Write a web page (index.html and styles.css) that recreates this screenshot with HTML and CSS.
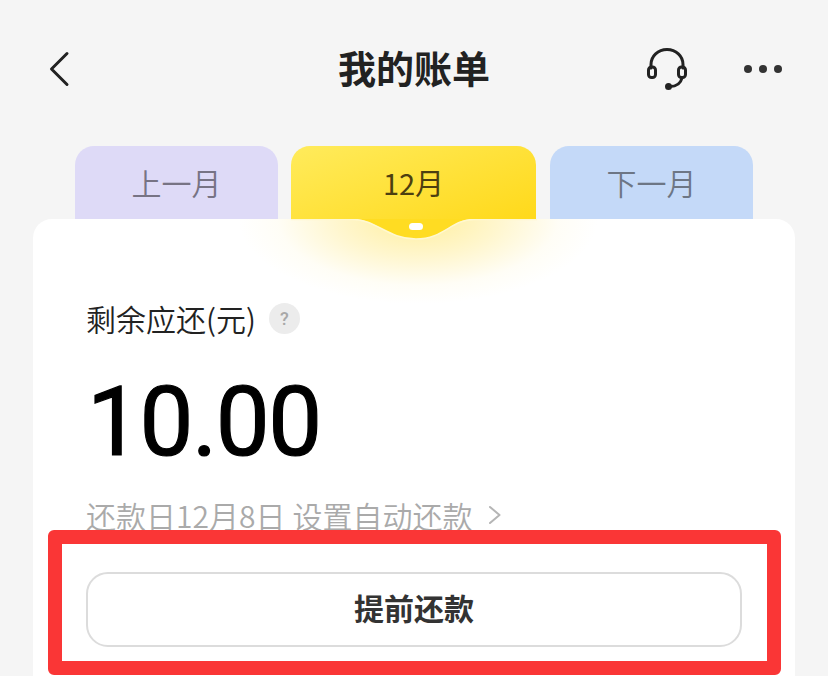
FILE: index.html
```html
<!DOCTYPE html>
<html lang="zh-CN">
<head>
<meta charset="utf-8">
<title>我的账单</title>
<link rel="stylesheet" href="styles.css">
</head>
<body>
<div class="page">
  <header class="nav">
    <svg class="back" width="22" height="36" viewBox="0 0 22 36"><path d="M19 2.500 3.500 18 19 33.500" fill="none" stroke="#222" stroke-width="3" stroke-linecap="round" stroke-linejoin="round"/></svg>
    <h1 class="title">我的账单</h1>
    <div class="actions">
      <svg class="headset" width="42" height="44" viewBox="0 0 42 44" fill="none" stroke="#222" stroke-width="3" stroke-linecap="round" stroke-linejoin="round"><path d="M5 21V17.500C5 9 12 2.500 21 2.500S37 9 37 17.500V21"/><rect x="2.500" y="20" width="7" height="10.500" rx="3"/><rect x="32.500" y="20" width="7" height="10.500" rx="3"/><path d="M36 31C34.500 37 30 39.500 24 39.500"/><circle cx="22.500" cy="39.500" r="2" fill="#222"/></svg>
      <div class="dots"><span class="dot"></span><span class="dot"></span><span class="dot"></span></div>
    </div>
  </header>
  <nav class="tabs">
    <div class="tab tab-prev">上一月</div>
    <div class="tab tab-current">12月</div>
    <div class="tab tab-next">下一月</div>
  </nav>
  <main class="card">
    <div class="glow"></div>
    <svg class="notch" width="246" height="22" viewBox="0 0 246 22"><path d="M0 0H62C85 0 97 20 125 20S160 0 183 0H246" fill="#ffdc22"/><path d="M0 .5H62C85 .5 97 20 125 20S160 .5 183 .5H246" fill="none" stroke="#fff8d0" stroke-width="1.500"/></svg>
    <span class="pill"></span>
    <div class="label-row">
      <span class="label">剩余应还(元)</span>
      <span class="help">?</span>
    </div>
    <div class="amount">10.00</div>
    <div class="due">
      <span>还款日12月8日</span>
      <span>设置自动还款</span>
      <svg class="chev" width="14" height="20" viewBox="0 0 14 20"><path d="M2 2 11.500 10 2 18" fill="none" stroke="#b5b5b5" stroke-width="2" stroke-linecap="round" stroke-linejoin="round"/></svg>
    </div>
    <button class="repay">提前还款</button>
  </main>
  <div class="highlight"></div>
</div>
</body>
</html>
```
FILE: styles.css
```css
* { box-sizing: border-box; }
html, body { margin: 0; padding: 0; }
body {
  background: #f5f5f5;
  font-family: "Noto Sans CJK SC", "Liberation Sans", sans-serif;
}
.page {
  position: relative;
  width: 828px;
  height: 676px;
  overflow: hidden;
}
.nav {
  position: relative;
  height: 146px;
  padding: 51px 46px 0 48px;
  display: flex;
  justify-content: space-between;
  align-items: flex-start;
}
.title {
  position: absolute;
  left: 0;
  right: 0;
  top: 40px;
  margin: 0;
  text-align: center;
  font-size: 38px;
  line-height: 54px;
  font-weight: 700;
  color: #222;
}
.actions {
  display: flex;
  align-items: flex-start;
  gap: 56px;
  margin-top: -4px;
}
.dots {
  display: flex;
  gap: 7px;
  margin-top: 18px;
}
.dot {
  width: 8px;
  height: 8px;
  border-radius: 50%;
  background: #333;
}
.tabs {
  display: flex;
  height: 73px;
  margin-left: 75px;
}
.tab {
  width: 203px;
  border-radius: 19px 19px 0 0;
  text-align: center;
  font-size: 30px;
  font-weight: 350;
  line-height: 72px;
}
.tab-prev { background: #dedaf7; color: #777384; }
.tab-next { background: #c4d9f8; color: #6d7685; }
.tab-current {
  width: 245px;
  margin: 0 14px 0 13px;
  background: linear-gradient(160deg, #ffeb5c 0%, #ffd91a 100%);
  color: #4d3f10;
  font-size: 29px;
  font-weight: 400;
}
.card {
  position: relative;
  width: 762px;
  height: 520px;
  margin-left: 33px;
  padding: 77px 54px 0;
  background: #fff;
  border-radius: 19px 19px 0 0;
}
.glow {
  position: absolute;
  left: 205px;
  top: 0;
  width: 360px;
  height: 90px;
  background: radial-gradient(ellipse 180px 85px at 50% 0, rgba(255, 222, 60, .5) 0%, rgba(255, 224, 80, .28) 45%, rgba(255, 235, 140, .08) 78%, rgba(255, 240, 180, 0) 100%);
}
.notch {
  position: absolute;
  left: 258px;
  top: 0;
}
.pill {
  position: absolute;
  left: 376px;
  top: 4px;
  width: 14px;
  height: 7px;
  border-radius: 4px;
  background: #fff;
}
.label-row {
  display: flex;
  align-items: center;
  gap: 13px;
  height: 44px;
  margin-left: -1px;
  position: relative;
}
.label {
  font-size: 30px;
  font-weight: 350;
  line-height: 44px;
  color: #222;
}
.help {
  width: 31px;
  height: 31px;
  margin-top: 1px;
  border-radius: 50%;
  background: #ececec;
  color: #a8a8a8;
  font-family: "Roboto", sans-serif;
  font-size: 18px;
  font-weight: 500;
  line-height: 31px;
  text-align: center;
}
.amount {
  margin-top: 26px;
  font-family: "Roboto", sans-serif;
  font-size: 96px;
  font-weight: 400;
  line-height: 112px;
  color: #000;
  letter-spacing: -1.500px;
  -webkit-text-stroke: 1.200px #000;
}
.due {
  display: flex;
  align-items: center;
  gap: 7px;
  height: 44px;
  margin: 15px 0 0 -1px;
  font-size: 30px;
  font-weight: 350;
  line-height: 44px;
  color: #aaa;
}
.chev { margin-left: 9px; }
.repay {
  display: block;
  width: 656px;
  height: 75px;
  margin: 35px 0 0 -1px;
  padding: 0 0 5px;
  border: 2px solid #dcdcdc;
  border-radius: 22px;
  background: #fff;
  font-family: inherit;
  font-size: 30px;
  font-weight: 700;
  color: #333;
}
.highlight {
  position: absolute;
  left: 48px;
  top: 530px;
  width: 733px;
  height: 145px;
  border: 14px solid #fa3636;
  border-radius: 6px;
}
```
